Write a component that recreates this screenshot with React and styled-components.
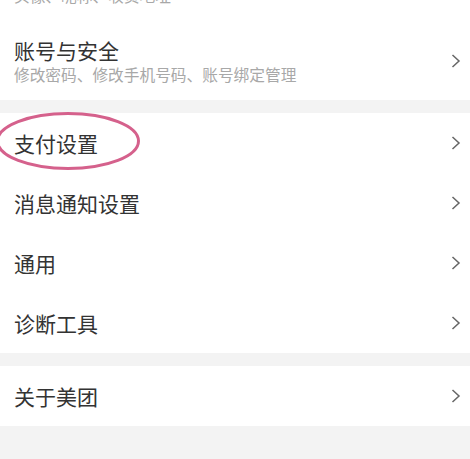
import React from 'react'
import styled, { createGlobalStyle } from 'styled-components'

const GlobalStyle = createGlobalStyle`
    html, body {
        margin: 0;
        padding: 0;
        background: #f3f3f3;
        overflow: hidden;
    }
    body {
        font-family: "Noto Sans CJK SC", "Noto Sans", sans-serif;
    }
`;

const groups = [
    [
        { title: '个人信息', sub: '头像、昵称、收货地址' },
        { title: '账号与安全', sub: '修改密码、修改手机号码、账号绑定管理' },
    ],
    [
        { title: '支付设置', circled: true },
        { title: '消息通知设置' },
        { title: '通用' },
        { title: '诊断工具' },
    ],
    [
        { title: '关于美团' },
    ],
];

function Chevron() {
    return (
        <svg width="10" height="14" viewBox="0 0 10 14">
            <polyline points="1.5,1 8,7 1.5,13" fill="none" stroke="#666" strokeWidth="1.5" strokeLinejoin="miter" />
        </svg>
    )
}

function Circle() {
    return (
        <Oval width="150" height="64" viewBox="0 0 150 64">
            <ellipse cx="73" cy="31" rx="70.5" ry="27.5" fill="none" stroke="#d5618c" strokeWidth="3" />
        </Oval>
    )
}

export default function App() {
    return (
        <>
            <GlobalStyle />
            <Page>
                {groups.map((items, gi) => (
                    <Group key={gi}>
                        {items.map((item) => (
                            <Row key={item.title} $tall={!!item.sub}>
                                <Texts>
                                    <Title>{item.title}</Title>
                                    {item.sub && <Sub>{item.sub}</Sub>}
                                </Texts>
                                <Chevron />
                                {item.circled && <Circle />}
                            </Row>
                        ))}
                    </Group>
                ))}
            </Page>
        </>
    )
}

const Page = styled.div`
    margin-top: -58px;
    display: flex;
    flex-direction: column;
    gap: 13px;
`;

const Group = styled.div`
    background: #fff;
    display: flex;
    flex-direction: column;
`;

const Row = styled.div`
    position: relative;
    display: flex;
    align-items: center;
    justify-content: space-between;
    height: ${(p) => (p.$tall ? '79px' : '60px')};
    box-sizing: border-box;
    padding: ${(p) => (p.$tall ? '16px 9px 15px 14px' : '0 9px 0 14px')};
`;

const Texts = styled.div`
    display: flex;
    flex-direction: column;
    gap: 2px;
`;

const Title = styled.div`
    font-size: 21px;
    line-height: 26px;
    color: #333;
`;

const Sub = styled.div`
    font-size: 15.7px;
    line-height: 20px;
    color: #a8a8a8;
`;

const Oval = styled.svg`
    position: absolute;
    left: -5px;
    top: -3px;
    pointer-events: none;
`;
